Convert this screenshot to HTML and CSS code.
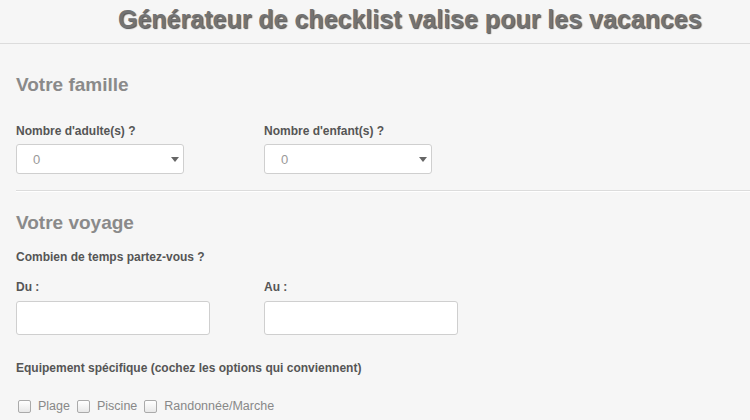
FILE: index.html
```html
<!DOCTYPE html>
<html lang="fr">
<head>
<meta charset="utf-8">
<title>Générateur de checklist</title>
<link rel="stylesheet" href="styles.css">
</head>
<body>
<header class="topbar">
  <h1 class="title">Générateur de checklist valise pour les vacances</h1>
</header>
<main class="content">
  <section class="section family">
    <h2 class="section-title">Votre famille</h2>
    <div class="row">
      <div class="field">
        <label class="label">Nombre d'adulte(s) ?</label>
        <div class="select"><span class="select-value">0</span><span class="caret"></span></div>
      </div>
      <div class="field">
        <label class="label">Nombre d'enfant(s) ?</label>
        <div class="select"><span class="select-value">0</span><span class="caret"></span></div>
      </div>
    </div>
  </section>
  <hr class="divider">
  <section class="section trip">
    <h2 class="section-title voyage">Votre voyage</h2>
    <p class="label question">Combien de temps partez-vous ?</p>
    <div class="row">
      <div class="field">
        <label class="label">Du :</label>
        <div class="input"></div>
      </div>
      <div class="field">
        <label class="label">Au :</label>
        <div class="input"></div>
      </div>
    </div>
    <p class="label equip">Equipement spécifique (cochez les options qui conviennent)</p>
    <div class="checks">
      <label class="check"><span class="box"></span>Plage</label>
      <label class="check"><span class="box"></span>Piscine</label>
      <label class="check"><span class="box"></span>Randonnée/Marche</label>
    </div>
  </section>
</main>
</body>
</html>
```
FILE: styles.css
```css
html, body {
  margin: 0;
  padding: 0;
  background: #f6f6f6;
  font-family: "Liberation Sans", Arial, sans-serif;
  overflow: hidden;
}
.topbar {
  height: 44px;
  border-bottom: 1px solid #dcdcdc;
  padding-left: 118px;
  box-sizing: border-box;
}
.title {
  margin: 0;
  padding-top: 4px;
  font-size: 25px;
  font-weight: bold;
  color: #737373;
  text-shadow: 1px 1px 1px #555;
  line-height: 30px;
}
.content {
  padding-left: 16px;
}
.section-title {
  margin: 0;
  padding-top: 30px;
  font-size: 19px;
  font-weight: bold;
  color: #8a8a8a;
  line-height: 22px;
}
.section-title.voyage {
  padding-top: 20px;
}
.row {
  display: flex;
}
.field {
  width: 248px;
  display: flex;
  flex-direction: column;
}
.label {
  display: block;
  font-size: 12px;
  font-weight: bold;
  color: #555;
  line-height: 14px;
  margin: 0;
}
.family .field .label {
  margin-top: 28px;
  margin-bottom: 6px;
}
.trip .field .label {
  margin-top: 16px;
  margin-bottom: 7px;
}
.select {
  width: 168px;
  height: 30px;
  box-sizing: border-box;
  background: #fff;
  border: 1px solid #cfcfcf;
  border-radius: 3px;
  display: flex;
  align-items: center;
  justify-content: space-between;
  padding: 0 4px 0 16px;
}
.select-value {
  font-size: 13px;
  color: #999;
}
.caret {
  width: 0;
  height: 0;
  border-left: 4px solid transparent;
  border-right: 4px solid transparent;
  border-top: 5px solid #666;
}
.divider {
  margin: 16px 0 0 0;
  border: 0;
  border-top: 1px solid #dcdcdc;
  border-bottom: 1px solid #ffffff;
  height: 0;
}
.question {
  margin-top: 16px;
}
.input {
  width: 194px;
  height: 34px;
  box-sizing: border-box;
  background: #fff;
  border: 1px solid #cfcfcf;
  border-radius: 3px;
}
.equip {
  margin-top: 26px;
}
.checks {
  display: flex;
  gap: 7px;
  margin-top: 24px;
  padding-left: 2px;
}
.check {
  display: flex;
  align-items: center;
  gap: 7px;
  font-size: 12.5px;
  color: #888;
}
.box {
  width: 11px;
  height: 11px;
  border: 1px solid #aaa;
  border-radius: 2px;
  background: linear-gradient(#fff, #e8e8e8);
}
```
